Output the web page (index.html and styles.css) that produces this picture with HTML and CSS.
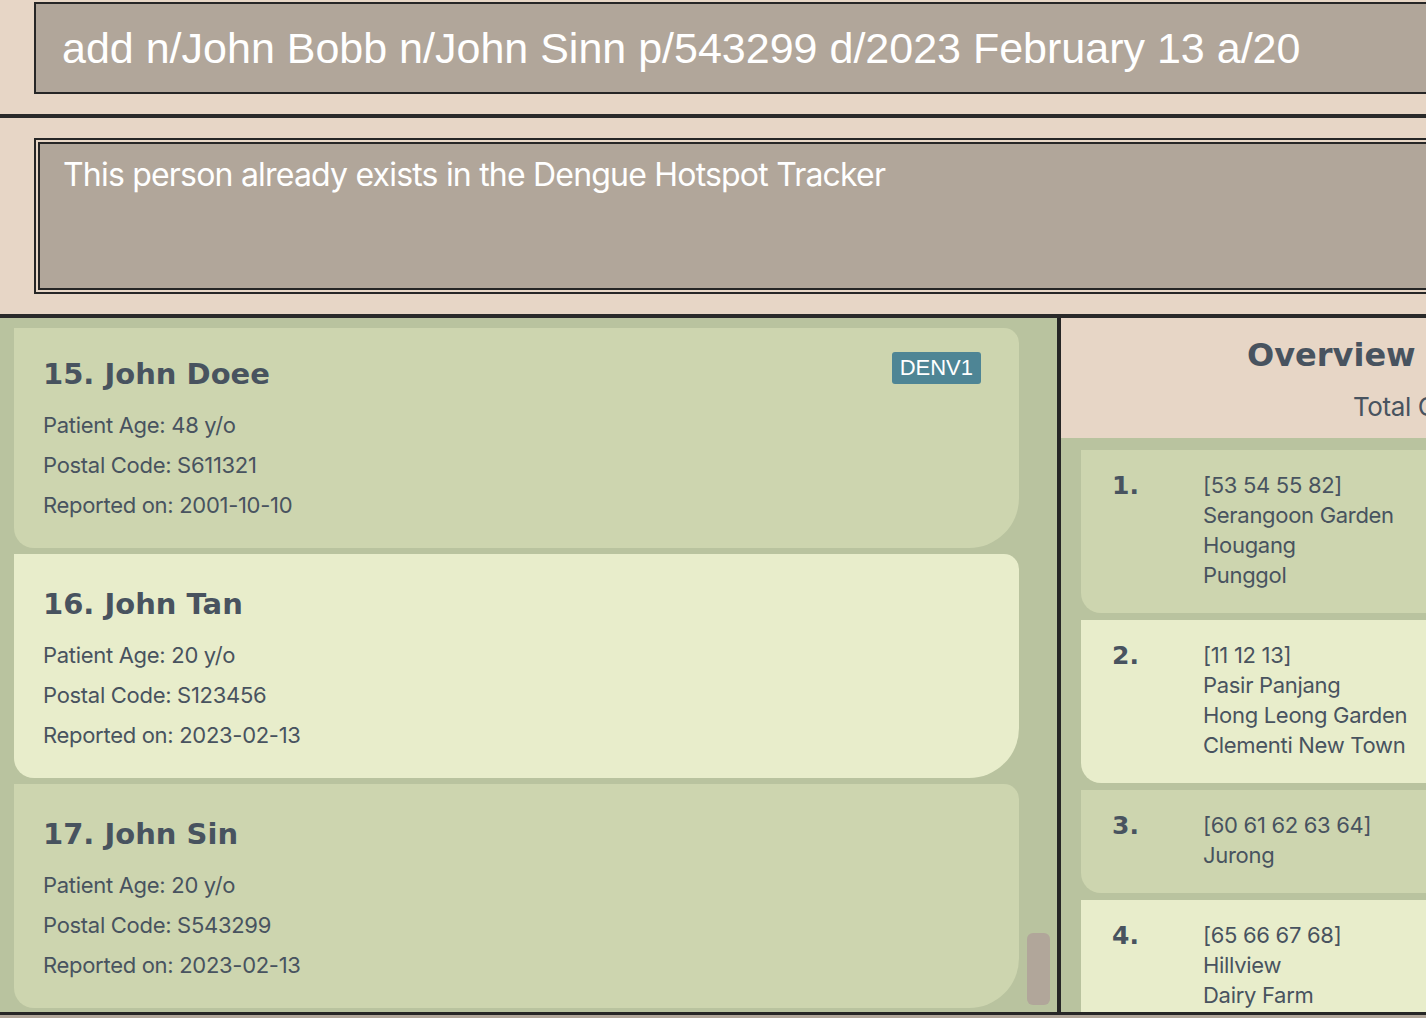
FILE: index.html
```html
<!DOCTYPE html>
<html lang="en">
<head>
<meta charset="utf-8">
<title>Dengue Hotspot Tracker</title>
<link rel="stylesheet" href="styles.css">
</head>
<body>
<div class="app">
  <section class="cmd-section">
    <div class="cmd-box">add n/John Bobb n/John Sinn p/543299 d/2023 February 13 a/20</div>
  </section>
  <section class="result-section">
    <div class="result-outer">
      <div class="result-inner">This person already exists in the Dengue Hotspot Tracker</div>
    </div>
  </section>
  <main class="main">
    <div class="list-panel">
      <div class="card card-dark card-first">
        <div class="card-head">
          <h2 class="name">15. John Doee</h2>
          <span class="badge">DENV1</span>
        </div>
        <div class="details">
          <div class="detail">Patient Age: 48 y/o</div>
          <div class="detail">Postal Code: S611321</div>
          <div class="detail">Reported on: 2001-10-10</div>
        </div>
      </div>
      <div class="card card-light">
        <div class="card-head">
          <h2 class="name">16. John Tan</h2>
        </div>
        <div class="details">
          <div class="detail">Patient Age: 20 y/o</div>
          <div class="detail">Postal Code: S123456</div>
          <div class="detail">Reported on: 2023-02-13</div>
        </div>
      </div>
      <div class="card card-dark">
        <div class="card-head">
          <h2 class="name">17. John Sin</h2>
        </div>
        <div class="details">
          <div class="detail">Patient Age: 20 y/o</div>
          <div class="detail">Postal Code: S543299</div>
          <div class="detail">Reported on: 2023-02-13</div>
        </div>
      </div>
      <div class="scroll-thumb"></div>
    </div>
    <div class="overview-panel">
      <div class="ov-header">
        <div class="ov-title">Overview</div>
        <div class="ov-total">Total Cases: 20</div>
      </div>
      <div class="ov-list">
        <div class="ov-card card-dark">
          <div class="ov-num">1.</div>
          <div class="ov-lines">
            <div>[53 54 55 82]</div>
            <div>Serangoon Garden</div>
            <div>Hougang</div>
            <div>Punggol</div>
          </div>
        </div>
        <div class="ov-card card-light">
          <div class="ov-num">2.</div>
          <div class="ov-lines">
            <div>[11 12 13]</div>
            <div>Pasir Panjang</div>
            <div>Hong Leong Garden</div>
            <div>Clementi New Town</div>
          </div>
        </div>
        <div class="ov-card card-dark">
          <div class="ov-num">3.</div>
          <div class="ov-lines">
            <div>[60 61 62 63 64]</div>
            <div>Jurong</div>
          </div>
        </div>
        <div class="ov-card card-light">
          <div class="ov-num">4.</div>
          <div class="ov-lines">
            <div>[65 66 67 68]</div>
            <div>Hillview</div>
            <div>Dairy Farm</div>
          </div>
        </div>
      </div>
    </div>
  </main>
  <footer class="status"></footer>
</div>
</body>
</html>
```

FILE: styles.css
```css
html, body {
  margin: 0;
  padding: 0;
  overflow: hidden;
  background: #e7d6c6;
}

.app {
  width: 1600px;
  height: 1018px;
  display: flex;
  flex-direction: column;
  background: #e7d6c6;
}

/* command box */
.cmd-section {
  padding: 2px 0 20px 34px;
}

.cmd-box {
  height: 88px;
  border: 2px solid #262626;
  background: #b1a69a;
  color: #ffffff;
  font-family: "Liberation Sans", Arial, sans-serif;
  font-size: 43px;
  line-height: 88px;
  padding-left: 26px;
  white-space: nowrap;
}

/* result box */
.result-section {
  border-top: 4px solid #2a2a2a;
  padding: 20px 0 20px 34px;
}

.result-outer {
  border: 2px solid #262626;
  padding: 2px;
}

.result-inner {
  border: 2px solid #262626;
  background: #b1a69a;
  height: 148px;
  box-sizing: border-box;
  padding: 11px 0 0 23px;
  color: #ffffff;
  font-family: Inter, "Noto Sans", sans-serif;
  font-size: 32px;
  line-height: 40px;
  letter-spacing: -0.8px;
  white-space: nowrap;
}

/* main area */
.main {
  border-top: 4px solid #2a2a2a;
  height: 694px;
  display: flex;
  flex: none;
}

.list-panel {
  width: 1057px;
  flex: none;
  box-sizing: border-box;
  background: #b9c39f;
  position: relative;
  overflow: hidden;
  padding: 10px 0 0 14px;
  display: flex;
  flex-direction: column;
  gap: 6px;
}

.card {
  width: 1005px;
  flex: none;
  box-sizing: border-box;
  border-radius: 0 15px 50px 20px;
  padding: 32px 38px 23px 29px;
}

.card-first {
  padding-top: 28px;
}

.card-dark {
  background: #cdd5af;
}

.card-light {
  background: #e8edcb;
}

.card-head {
  display: flex;
  justify-content: space-between;
  align-items: flex-start;
}

.name {
  margin: 0;
  font-family: "DejaVu Sans", Verdana, sans-serif;
  font-weight: bold;
  font-size: 29px;
  line-height: 36px;
  color: #48535f;
}

.badge {
  margin-top: -4px;
  height: 32px;
  line-height: 32px;
  padding: 0 8px;
  background: #4e8595;
  color: #ffffff;
  font-family: "Liberation Sans", Arial, sans-serif;
  font-size: 22px;
  border-radius: 3px;
}

.details {
  margin-top: 13px;
}

.detail {
  font-family: Inter, "Noto Sans", sans-serif;
  font-size: 22px;
  line-height: 40px;
  letter-spacing: -0.3px;
  color: #48535f;
}

.scroll-thumb {
  position: absolute;
  left: 1027px;
  top: 615px;
  width: 23px;
  height: 72px;
  background: #b1a69a;
  border-radius: 6px;
}

/* overview */
.overview-panel {
  flex: 1;
  min-width: 0;
  border-left: 4px solid #262626;
  display: flex;
  flex-direction: column;
}

.ov-header {
  height: 120px;
  flex: none;
  box-sizing: border-box;
  padding-top: 17px;
  background: #e7d6c6;
  color: #48535f;
  white-space: nowrap;
}

.ov-title {
  font-family: "DejaVu Sans", Verdana, sans-serif;
  font-weight: bold;
  font-size: 32px;
  line-height: 40px;
  padding-left: 186px;
}

.ov-total {
  margin-top: 15px;
  font-family: Inter, "Noto Sans", sans-serif;
  font-size: 26px;
  line-height: 34px;
  letter-spacing: -0.4px;
  padding-left: 292px;
}

.ov-list {
  flex: 1;
  min-height: 0;
  background: #b9c39f;
  padding: 12px 0 0 20px;
  display: flex;
  flex-direction: column;
  gap: 7px;
  overflow: hidden;
}

.ov-card {
  flex: none;
  display: grid;
  grid-template-columns: 91px 1fr;
  padding: 20px 0 23px 31px;
  border-radius: 0 15px 50px 20px;
  color: #48535f;
}

.ov-num {
  margin-top: 1px;
  font-family: "DejaVu Sans", Verdana, sans-serif;
  font-weight: bold;
  font-size: 25px;
  line-height: 30px;
}

.ov-lines div {
  font-family: Inter, "Noto Sans", sans-serif;
  font-size: 22px;
  line-height: 30px;
  letter-spacing: -0.3px;
  white-space: nowrap;
}

.status {
  flex: 1;
  border-top: 3px solid #262626;
  background: #b1a69a;
}
```
